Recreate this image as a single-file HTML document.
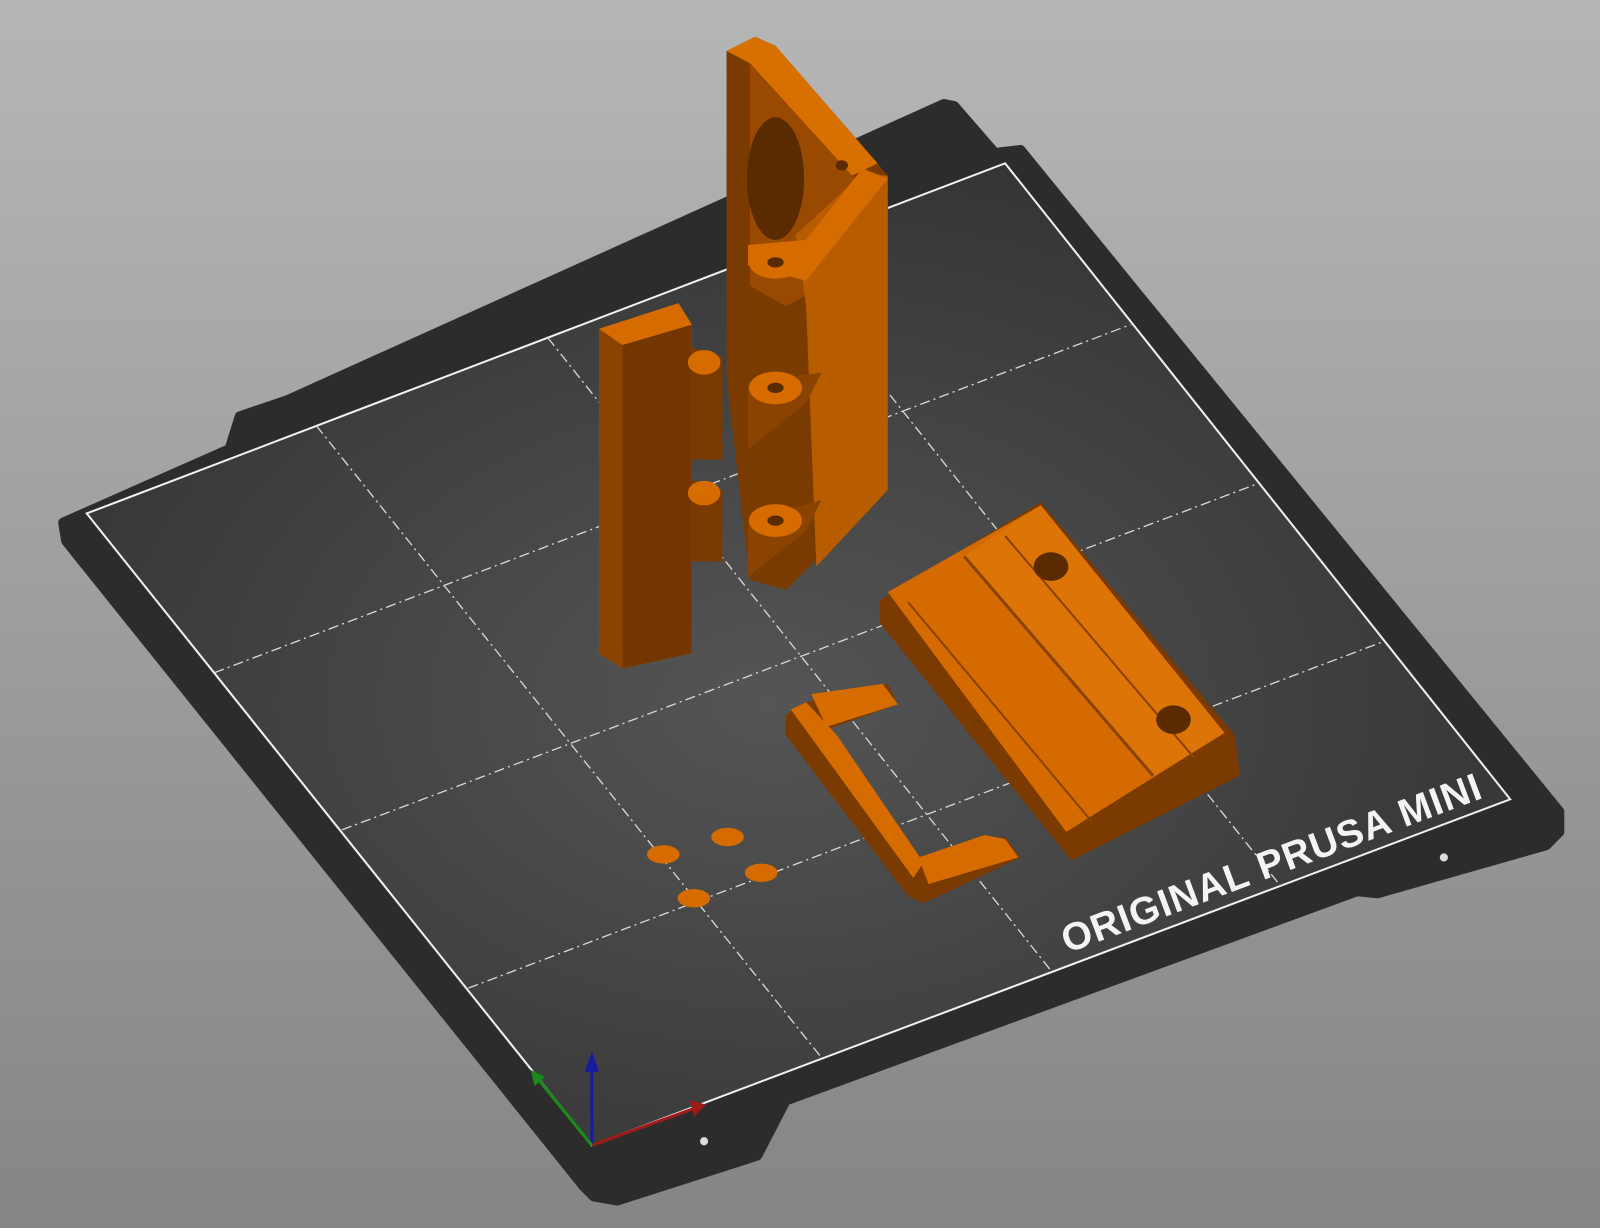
<!DOCTYPE html>
<html><head><meta charset="utf-8"><style>
html,body{margin:0;padding:0;width:1600px;height:1228px;overflow:hidden;background:#a0a0a0}
svg{display:block}
</style></head><body>
<svg width="1600" height="1228" viewBox="0 0 1568 1203" preserveAspectRatio="none" xmlns="http://www.w3.org/2000/svg">
<defs>
<linearGradient id="bg" x1="0" y1="0" x2="0" y2="1"><stop offset="0" stop-color="#b6b6b6"/><stop offset="1" stop-color="#858585"/></linearGradient>
<radialGradient id="bed" cx="0.48" cy="0.55" r="0.6"><stop offset="0" stop-color="#555"/><stop offset="1" stop-color="#333"/></radialGradient>
</defs>
<rect width="1568" height="1203" fill="url(#bg)"/>
<!-- bed -->
<path d="M62,512 L225,440 L235,408 L282,392 L925,102 L935,104 L975,150 L1000,147 L1528,795 L1528,815 L1515,828 L1350,875 L1330,873 L770,1078 L742,1132 L605,1176 L582,1172 L572,1162 L65,530 Z" fill="#2c2c2c" stroke="#2c2c2c" stroke-width="10" stroke-linejoin="round"/>
<path d="M85,503 L985,160 L1480,783 L580,1122 Z" fill="url(#bed)" stroke="#f0f0f0" stroke-width="2"/>
<g stroke="#d8d8d8" stroke-width="1.3" stroke-dasharray="10,4,2,4" fill="none">
<line x1="310" y1="417" x2="805" y2="1036"/>
<line x1="537" y1="331" x2="1030" y2="951"/>
<line x1="760" y1="246" x2="1255" y2="868"/>
<line x1="210" y1="659" x2="1108" y2="318"/>
<line x1="335" y1="813" x2="1232" y2="474"/>
<line x1="459" y1="968" x2="1357" y2="628"/>
</g>
<text x="0" y="0" transform="translate(1046,934) rotate(-20.5)" font-family="Liberation Sans, sans-serif" font-weight="bold" font-size="38" fill="#f4f4f4" letter-spacing="1">ORIGINAL PRUSA MINI</text>
<!-- axes -->
<line x1="580" y1="1122" x2="580" y2="1045" stroke="#1a1aa0" stroke-width="3"/>
<polygon points="573,1050 587,1050 580,1030" fill="#1a1aa0"/>
<line x1="580" y1="1122" x2="680" y2="1086" stroke="#a01a1a" stroke-width="3"/>
<polygon points="676,1078 692,1082 680,1094" fill="#a01a1a"/>
<line x1="580" y1="1122" x2="528" y2="1058" stroke="#1a8a1a" stroke-width="3"/>
<polygon points="520,1048 534,1055 524,1064" fill="#1a8a1a"/>
<!-- bar -->
<polygon points="587,322 665,297 678,318 678,640 610,655 587,640" fill="#d66c00"/>
<polygon points="587,322 610,338 610,655 587,640" fill="#8a4300"/>
<polygon points="610,338 678,318 678,640 610,655" fill="#733600"/>
<polygon points="678,340 708,350 708,450 678,450" fill="#7a3a00"/>
<ellipse cx="690" cy="355" rx="16" ry="12" fill="#d66c00"/>
<polygon points="678,470 708,480 708,550 678,550" fill="#7a3a00"/>
<ellipse cx="690" cy="483" rx="16" ry="12" fill="#d66c00"/>
<!-- tall piece -->
<polygon points="712,50 740,36 760,45 860,160 870,172 870,480 770,578 735,568 712,370" fill="#7a3b00"/>
<polygon points="712,50 740,36 760,45 860,160 835,172 735,62" fill="#d87000"/>
<polygon points="735,62 835,172 845,180 845,260 770,300 735,280" fill="#9a4a00"/>
<ellipse cx="760" cy="175" rx="28" ry="60" fill="#5a2a00"/>
<polygon points="780,230 845,170 870,172 870,480 800,555 790,300" fill="#b85c00"/>
<polygon points="733,240 790,235 845,165 870,175 790,275 733,260" fill="#d66c00"/>
<ellipse cx="760" cy="257" rx="26" ry="16" fill="#d66c00"/>
<ellipse cx="760" cy="257" rx="8" ry="5" fill="#5a2a00"/>
<polygon points="733,375 805,365 790,395 733,440" fill="#8a4300"/>
<ellipse cx="760" cy="380" rx="26" ry="16" fill="#d66c00"/>
<ellipse cx="760" cy="380" rx="8" ry="5" fill="#5a2a00"/>
<polygon points="733,510 805,490 790,520 733,565" fill="#8a4300"/>
<ellipse cx="760" cy="510" rx="26" ry="16" fill="#d66c00"/>
<ellipse cx="760" cy="510" rx="8" ry="5" fill="#5a2a00"/>
<ellipse cx="825" cy="162" rx="6" ry="5" fill="#5a2a00"/>
<!-- plate -->
<polygon points="862,588 1020,492 1210,720 1215,760 1050,843 862,610" fill="#7a3a00"/>
<polygon points="870,580 1020,495 1200,718 1045,815" fill="#d46a00"/>
<polygon points="945,545 1020,495 1200,718 1130,760" fill="#dc7408"/>
<line x1="945" y1="545" x2="1130" y2="760" stroke="#8a4300" stroke-width="3"/>
<line x1="985" y1="525" x2="1170" y2="742" stroke="#8a4300" stroke-width="2"/>
<line x1="890" y1="590" x2="1070" y2="805" stroke="#8a4300" stroke-width="2"/>
<ellipse cx="1030" cy="555" rx="17" ry="14" fill="#5a2a00"/>
<ellipse cx="1150" cy="705" rx="17" ry="14" fill="#5a2a00"/>
<!-- clip -->
<polygon points="770,700 790,688 870,670 880,690 810,715 900,840 985,820 1000,840 905,885 890,878 770,720" fill="#7a3a00"/>
<polygon points="775,695 790,688 820,720 905,845 895,860" fill="#d66c00"/>
<polygon points="795,680 865,670 880,690 810,712" fill="#d66c00"/>
<polygon points="900,840 965,818 985,822 998,840 910,866" fill="#d66c00"/>
<!-- small -->
<ellipse cx="650" cy="837" rx="16" ry="9" fill="#d66c00"/>
<ellipse cx="713" cy="820" rx="16" ry="9" fill="#d66c00"/>
<ellipse cx="746" cy="855" rx="16" ry="9" fill="#d66c00"/>
<ellipse cx="680" cy="880" rx="16" ry="9" fill="#d66c00"/>
<circle cx="690" cy="1118" r="4" fill="#ddd"/>
<circle cx="1415" cy="840" r="4" fill="#ddd"/>
</svg>
</body></html>
